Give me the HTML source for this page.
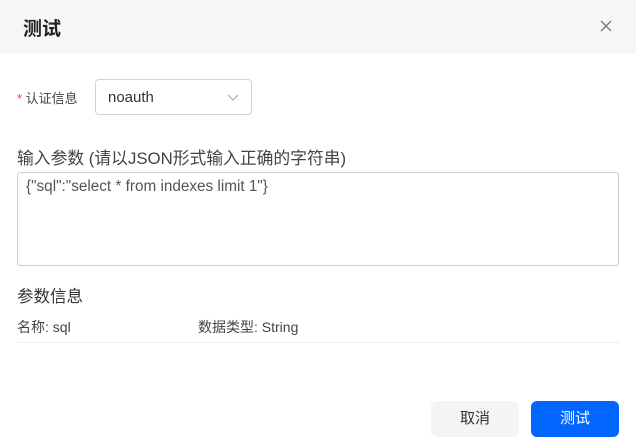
<!DOCTYPE html>
<html><head><meta charset="utf-8"><style>
*{box-sizing:border-box;margin:0;padding:0}
body{width:636px;height:444px;background:#fff;font-family:"Liberation Sans","Noto Sans CJK SC",sans-serif;position:relative;overflow:hidden;color:#333}
.hdr{position:absolute;left:0;top:0;width:636px;height:54px;background:#f5f6f8}
.title{position:absolute;left:23px;top:14px;font-size:19px;font-weight:bold;color:#222}
.close{position:absolute;left:600px;top:20px}
.lbl{position:absolute;left:17px;top:88px;font-size:13px;color:#444}
.lbl b{color:#f5434b;font-weight:normal}
.sel{position:absolute;left:95px;top:79px;width:157px;height:36px;border:1px solid #d0d3d8;border-radius:4px;font-size:15px;color:#333;padding:9px 0 0 12px}
.sel svg{position:absolute;right:12px;top:14px}
.h2{position:absolute;left:17px;top:145px;font-size:16.8px;color:#444}
.ta{position:absolute;left:17px;top:172px;width:602px;height:94px;border:1px solid #c9ccd1;border-radius:3px;font-size:15.3px;color:#555;padding:5px 8px}
.h3{position:absolute;left:17px;top:283px;font-size:16.5px;color:#333}
.row{position:absolute;left:17px;top:317px;font-size:14px;color:#444}
.row2{position:absolute;left:198px;top:317px;font-size:14px;color:#444}
.line{position:absolute;left:17px;top:342px;width:602px;height:1px;background:#eceef1}
.btn{position:absolute;top:401px;height:36px;border-radius:6px;font-size:15px;text-align:center;line-height:36px}
.c{left:431px;width:88px;background:#f3f4f6;color:#333}
.o{left:531px;width:88px;background:#0066ff;color:#fff}
</style></head><body>
<div class="hdr"></div>
<div class="title">测试</div>
<svg class="close" width="12" height="12" viewBox="0 0 12 12"><path d="M1 1L11 11M11 1L1 11" stroke="#777" stroke-width="1.3"/></svg>
<div class="lbl"><b>*</b> 认证信息</div>
<div class="sel">noauth<svg width="12" height="7" viewBox="0 0 12 7"><path d="M1 1L6 6L11 1" fill="none" stroke="#aaa" stroke-width="1.2"/></svg></div>
<div class="h2">输入参数 (请以JSON形式输入正确的字符串)</div>
<div class="ta">{"sql":"select * from indexes limit 1"}</div>
<div class="h3">参数信息</div>
<div class="row">名称: sql</div>
<div class="row2">数据类型: String</div>
<div class="line"></div>
<div class="btn c">取消</div>
<div class="btn o">测试</div>
</body></html>
